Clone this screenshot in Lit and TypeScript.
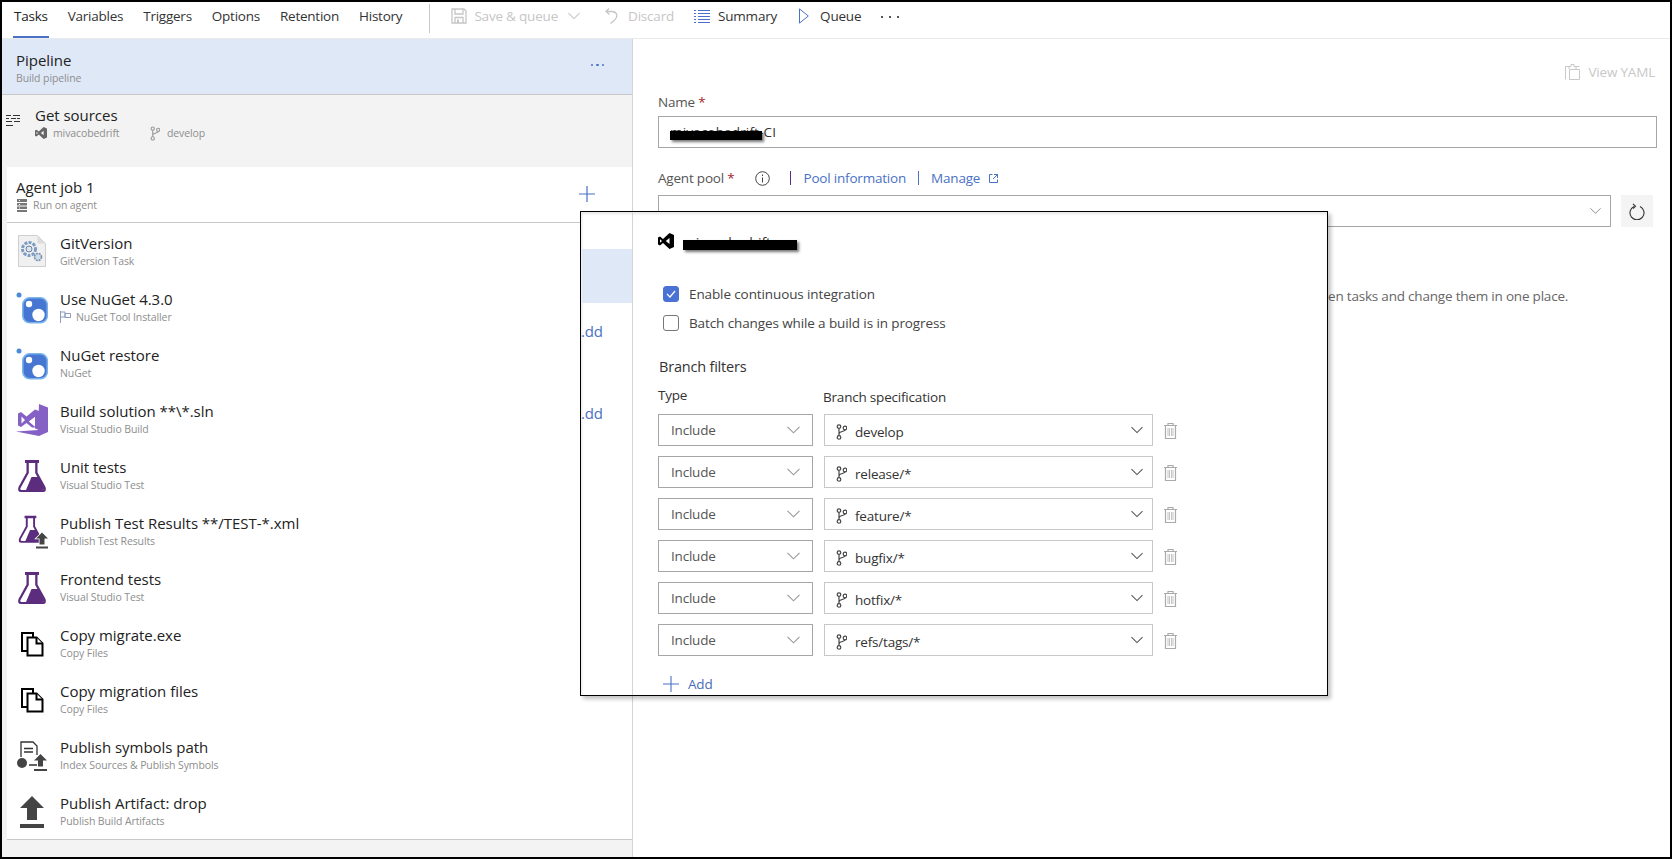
import { LitElement, html, svg, css } from "lit";
import { customElement } from "lit/decorators.js";

const vsLogo = (color: string, w = 12, h = 12) => html`<svg width=${w} height=${h} viewBox="0 0 16 16"><path fill=${color} d="M11.5 0 16 2v12l-4.500 2L5 10l-3 2.500L0 11.500v-7L2 3.500 5 6zM2 6.300v3.400L4 8zM11.500 5 7.800 8l3.700 3z"/></svg>`;

const branch = (color = "#444", w = 11, h = 16) => html`<svg width=${w} height=${h} viewBox="0 0 11 16" fill="none" stroke=${color} stroke-width="1.200"><circle cx="3" cy="2.600" r="1.800"/><circle cx="3" cy="13.400" r="1.800"/><circle cx="9" cy="4" r="1.800"/><path d="M3 4.500v7M3 10c0-3 6-2 6-4.200"/></svg>`;

const chevron = (color: string, w = 13) => html`<svg width=${w} height="8" viewBox="0 0 13 8" fill="none" stroke=${color} stroke-width="1.100"><path d="M.5.800 6.500 6.800 12.500.800"/></svg>`;

const flask = svg`<path fill="#5c2d7e" d="M9 1h14v3h-1.500v9.500L29.500 28Q31 33 27 33H5Q1 33 2.500 28L10.500 13.500V4H9z"/><path fill="#fff" d="M12.800 4H19.200V14L27.500 29Q28.300 31 26 31H6Q3.700 31 4.500 29L12.800 14z"/><path fill="#5c2d7e" d="M10 31 15.500 18H22.500L28 28.500Q28.800 31 26 31z"/>`;

const uploadArrow = (fill: string) => svg`<path fill=${fill} d="M12 0 24 12h-7v12H7V12H0zM0 28h24v4H0z"/>`;

const taskIcons: Record<string, unknown> = {
  git: html`<svg width="32" height="32" viewBox="0 0 32 32"><path fill="#f0f0f0" stroke="#cfcfcf" d="M2.500.500h19l8 8v23h-27z"/><path fill="#dcdcdc" d="M21.500.500v8h8z"/><circle cx="13" cy="14" r="6.500" fill="none" stroke="#7c9cc4" stroke-width="3" stroke-dasharray="3 1.200"/><circle cx="13" cy="14" r="3" fill="#dbe5f1" stroke="#6b7f99"/><circle cx="22" cy="22" r="3.500" fill="#cfdcec" stroke="#7c90aa" stroke-width="1.600" stroke-dasharray="2 .8"/></svg>`,
  nuget: html`<svg width="32" height="34" viewBox="0 0 32 34"><circle cx="3" cy="4" r="2.500" fill="#4a8bd6"/><rect x="6.800" y="6.800" width="24.500" height="25" rx="7" fill="#4676d2" stroke="#78b4ea" stroke-width="1.600"/><circle cx="13" cy="13" r="3.200" fill="#fff"/><circle cx="22.500" cy="24" r="6.200" fill="#fff"/></svg>`,
  vs: html`<svg width="32" height="34" viewBox="0 0 32 34"><g transform="translate(0 1)"><path fill="#8661c5" d="M23 0 32 3.500V28l-9 4-23-4.500L22 26z"/><path fill="#8661c5" d="M2 9.500 5 8l5.500 4.500L19 5.500 23 7v19l-4-1.500V13l-6 4.500 6 5-.1 1-2.900 0L10.500 19 5 23l-3-1.500zM5.500 12.500v7L9 16z"/><path fill="#fff" d="M19 13v9.500L13 17.500z"/></g></svg>`,
  flask: html`<svg width="32" height="34" viewBox="0 0 32 34">${flask}</svg>`,
  flaskUp: html`<svg width="32" height="34" viewBox="0 0 32 34"><g transform="translate(1 0) scale(.84)">${flask}</g><g transform="translate(20 17.500) scale(.5)" stroke="#fff" stroke-width="3" paint-order="stroke">${uploadArrow("#444")}</g></svg>`,
  copy: html`<svg width="32" height="32" viewBox="0 0 32 32" fill="#fff" stroke="#000" stroke-width="2"><path d="M6 6h11v18H6z"/><path d="M11.500 10.500h9l6 6v12H11.500z"/><path d="M20.500 10.500v6h6"/></svg>`,
  symbols: html`<svg width="32" height="34" viewBox="0 0 32 34"><g transform="translate(0 2)"><path fill="none" stroke="#333" stroke-width="1.300" d="M5 16V1h12l4 4v9"/><path stroke="#333" stroke-width="1.300" d="M8 7.500h9M8 11h9M13 24h8"/><circle cx="6" cy="22" r="5" fill="#444"/><path fill="#444" d="M24.500 13 31 19.500h-4v6h-5v-6h-4zM18 28h13v2H18z"/></g></svg>`,
  upload: html`<svg width="32" height="34" viewBox="0 0 32 34"><g transform="translate(4 1)">${uploadArrow("#444")}</g></svg>`,
};

const tasks = [
  { icon: "git", title: "GitVersion", sub: "GitVersion Task" },
  { icon: "nuget", title: "Use NuGet 4.3.0", sub: "NuGet Tool Installer", flag: true },
  { icon: "nuget", title: "NuGet restore", sub: "NuGet" },
  { icon: "vs", title: "Build solution **\\*.sln", sub: "Visual Studio Build" },
  { icon: "flask", title: "Unit tests", sub: "Visual Studio Test" },
  { icon: "flaskUp", title: "Publish Test Results **/TEST-*.xml", sub: "Publish Test Results" },
  { icon: "flask", title: "Frontend tests", sub: "Visual Studio Test" },
  { icon: "copy", title: "Copy migrate.exe", sub: "Copy Files" },
  { icon: "copy", title: "Copy migration files", sub: "Copy Files" },
  { icon: "symbols", title: "Publish symbols path", sub: "Index Sources & Publish Symbols" },
  { icon: "upload", title: "Publish Artifact: drop", sub: "Publish Build Artifacts" },
];

const filters = ["develop", "release/*", "feature/*", "bugfix/*", "hotfix/*", "refs/tags/*"];
const tabs = ["Tasks", "Variables", "Triggers", "Options", "Retention", "History"];

@customElement("app-root")
export class AppRoot extends LitElement {
  static styles = css`
    :host {
      display: block;
      position: relative;
      box-sizing: border-box;
      width: 1672px;
      height: 859px;
      border: 2px solid #000;
      background: #fff;
      overflow: hidden;
      font-family: "Open Sans", "Noto Sans", sans-serif;
      font-size: 13.5px;
      letter-spacing: -0.2px;
      color: #333;
    }
    .frame {
      display: flex;
      flex-direction: column;
      height: 100%;
    }

    /* top bar */
    .toolbar {
      display: flex;
      align-items: center;
      box-sizing: border-box;
      height: 37px;
      padding-left: 12px;
      border-bottom: 1px solid #eaeaea;
      flex: none;
    }
    .tabs {
      display: flex;
      gap: 20px;
      align-self: stretch;
      letter-spacing: -0.24px;
    }
    .tab {
      display: flex;
      align-items: center;
      box-sizing: border-box;
      height: 36px;
      padding-bottom: 6px;
      border-bottom: 2px solid transparent;
      color: #333;
    }
    .tab.active {
      border-bottom-color: #4a70c8;
      color: #222;
      margin: 0 -1px;
      padding: 0 1px 6px;
    }
    .divider {
      width: 1px;
      height: 29px;
      background: #c8c8c8;
      margin: -3px 21px 0 27px;
    }
    .action {
      display: flex;
      align-items: center;
      gap: 7px;
      margin-top: -8px;
      color: #333;
    }
    .action.off {
      color: #c6c6c6;
    }
    .more i {
      width: 2px;
      height: 2px;
      background: #555;
    }

    /* left panel */
    .main {
      display: flex;
      flex: 1;
      min-height: 0;
    }
    .left {
      width: 630px;
      flex: none;
      background: #f3f3f3;
      display: flex;
      flex-direction: column;
      border-right: 1px solid #d4d4d4;
    }
    .pipeline {
      box-sizing: border-box;
      height: 56px;
      background: #dfe8f7;
      border-bottom: 1px solid #c8c8c8;
      padding: 11px 28px 0 14px;
      display: flex;
      justify-content: space-between;
    }
    .big {
      font-size: 15px;
      line-height: 20px;
      letter-spacing: -0.03px;
      color: #222;
    }
    .small {
      font-size: 10.500px;
      line-height: 16px;
      letter-spacing: -0.1px;
      color: #8e8e8e;
    }
    .dots {
      display: flex;
      gap: 3px;
      align-items: center;
      height: 30px;
    }
    .dots i {
      width: 2.500px;
      height: 2.500px;
      border-radius: 50%;
      background: #4a70c8;
    }
    .sources {
      box-sizing: border-box;
      height: 72px;
      padding: 10px 0 0 4px;
      display: flex;
      gap: 15px;
    }
    .sources svg.lines {
      margin-top: 9px;
      flex: none;
    }
    .srcline {
      display: flex;
      align-items: center;
      height: 16px;
    }
    .srcline .name {
      margin-left: 6px;
      width: 97px;
    }
    .srcline .br {
      margin-left: 7px;
    }
    .job {
      flex: none;
      margin-left: 5px;
      background: #fff;
      border-bottom: 1px solid #c8c8c8;
    }
    .jobhead {
      box-sizing: border-box;
      height: 56px;
      border-bottom: 1px solid #c8c8c8;
      padding: 10px 37px 0 9px;
      display: flex;
      justify-content: space-between;
    }
    .jobhead .small {
      display: flex;
      align-items: center;
      gap: 6px;
      padding-left: 1px;
    }
    .plus {
      margin-top: 9px;
    }
    .task {
      box-sizing: border-box;
      height: 56px;
      display: flex;
      padding: 12px 0 0 9px;
      gap: 12px;
    }
    .task .ic {
      width: 32px;
      height: 32px;
      flex: none;
    }
    .task .big {
      margin-top: -2px;
    }
    .task .small {
      display: flex;
      align-items: center;
      gap: 5px;
    }

    /* right panel */
    .right {
      flex: 1;
      display: flex;
      flex-direction: column;
      padding: 25px 13px 0 25px;
      min-width: 0;
    }
    .yaml {
      display: flex;
      justify-content: flex-end;
      align-items: center;
      gap: 9px;
      height: 16px;
      padding-right: 2px;
      color: #c8c8c8;
    }
    .label {
      height: 20px;
      line-height: 20px;
      color: #555;
    }
    .label b,
    .req {
      font-weight: 400;
      color: #a4262c;
    }
    .namelabel {
      margin: 12px 0 4px;
    }
    .input {
      position: relative;
      box-sizing: border-box;
      height: 32px;
      border: 1px solid #a6a6a6;
      padding-left: 11px;
      line-height: 31px;
      letter-spacing: 0.15px;
      color: #333;
    }
    .redact {
      position: absolute;
      background: #000;
      box-shadow: 2px 2px 3px rgba(0, 0, 0, 0.55);
    }
    .input .redact {
      left: 11px;
      top: 14px;
      width: 92px;
      height: 9px;
    }
    .agent {
      display: flex;
      align-items: center;
      height: 20px;
      margin: 20px 0 7px;
      color: #555;
    }
    .link {
      color: #4a72c4;
    }
    .sep {
      width: 1px;
      height: 14px;
      background: #5c2d7e;
    }
    .selectrow {
      display: flex;
      gap: 10px;
    }
    .select {
      box-sizing: border-box;
      width: 953px;
      height: 32px;
      border: 1px solid #a6a6a6;
      display: flex;
      align-items: center;
      justify-content: flex-end;
      padding-right: 9px;
    }
    .refresh {
      width: 32px;
      height: 32px;
      background: #f4f4f4;
      display: flex;
      align-items: center;
      justify-content: center;
    }
    .hint {
      margin: 59px 0 0 670px;
      line-height: 20px;
      color: #666;
    }

    /* pasted trigger dialog */
    .dialog {
      position: absolute;
      left: 578px;
      top: 209px;
      box-sizing: border-box;
      width: 748px;
      height: 485px;
      background: #fff;
      border: 1px solid #000;
      box-shadow: 3px 3px 4px rgba(0, 0, 0, 0.24), inset 1px 2px 3px rgba(0, 0, 0, 0.1);
      display: flex;
    }
    .under {
      width: 51px;
      flex: none;
      border-right: 1px solid #d4d4d4;
      padding-top: 37px;
      font-size: 15px;
      color: #4a72c4;
    }
    .under .sel {
      height: 54px;
      margin-left: 1px;
      background: #dfe8f7;
    }
    .under div.dd {
      height: 20px;
      line-height: 20px;
      margin: 18px 0 62px 0;
    }
    .body {
      padding: 21px 0 0 25px;
      flex: 1;
      display: flex;
      flex-direction: column;
    }
    .repo {
      position: relative;
      display: flex;
      height: 16px;
      gap: 9px;
      color: #333;
      font-size: 14px;
      line-height: 18px;
    }
    .repo span {
      margin-top: 1px;
    }
    .repo .redact {
      left: 25px;
      top: 7px;
      width: 114px;
      height: 10px;
    }
    .checks {
      display: flex;
      flex-direction: column;
      gap: 13px;
      margin: 37px 0 0 5px;
      letter-spacing: -0.11px;
    }
    .check {
      display: flex;
      align-items: center;
      gap: 10px;
      height: 16px;
      color: #444;
    }
    .box {
      box-sizing: border-box;
      width: 16px;
      height: 16px;
      border-radius: 3px;
      border: 1px solid #777;
      display: flex;
      align-items: center;
      justify-content: center;
    }
    .box.on {
      background: #4a72d4;
      border-color: #4a72d4;
    }
    .heading {
      margin-top: 25px;
      padding-left: 1px;
      height: 22px;
      line-height: 22px;
      font-size: 14.500px;
      color: #333;
    }
    .cols {
      display: flex;
      gap: 10px;
      margin: 9px 0 7px;
      height: 20px;
      color: #333;
    }
    .cols div:first-child {
      width: 155px;
      margin-top: -1px;
    }
    .cols div:last-child {
      margin-top: 1px;
    }
    .rows {
      display: flex;
      flex-direction: column;
      gap: 10px;
    }
    .row {
      display: flex;
      align-items: center;
      gap: 11px;
    }
    .row > svg {
      margin-top: 2px;
    }
    .type,
    .spec {
      box-sizing: border-box;
      height: 32px;
      display: flex;
      align-items: center;
      justify-content: space-between;
    }
    .type {
      width: 155px;
      border: 1px solid #a6a6a6;
      padding: 0 12px 0 12px;
      color: #555;
    }
    .spec {
      width: 329px;
      border: 1px solid #c8c8c8;
      padding: 3px 9px 0 11px;
      color: #333;
    }
    .spec > div {
      display: flex;
      align-items: center;
      gap: 8px;
    }
    .add {
      display: flex;
      align-items: center;
      gap: 9px;
      height: 20px;
      margin: 18px 0 0 5px;
      color: #4a6bb8;
    }
  `;

  render() {
    return html`
      <div class="frame">
        ${this.renderToolbar()}
        <div class="main">
          ${this.renderLeft()} ${this.renderRight()}
        </div>
      </div>
      ${this.renderDialog()}
    `;
  }

  renderToolbar() {
    return html`
      <div class="toolbar">
        <div class="tabs">
          ${tabs.map((t, i) => html`<div class="tab ${i === 0 ? "active" : ""}">${t}</div>`)}
        </div>
        <div class="divider"></div>
        <div class="action off">
          <svg width="16" height="16" viewBox="0 0 16 16" fill="none" stroke="#c6c6c6" stroke-width="1.300"><path d="M1 1h12l2 2v12H1zM4 1v5h8V1M4 15V9.500h8V15"/><path d="M6 11.500h2v3.500H6z" fill="#c6c6c6" stroke="none"/></svg>
          <span>Save &amp; queue</span>
          <span style="margin-left:3px;display:flex">${chevron("#c6c6c6", 12)}</span>
        </div>
        <div class="action off" style="margin-left:25px;gap:10px">
          <svg width="13" height="16" viewBox="0 0 13 16" fill="none" stroke="#c6c6c6" stroke-width="1.300"><path d="M4 .500 1 3.500 4.500 6.500M1 3.500H6.500C12 3.500 14 8.500 9 12.500L5.500 15.500"/></svg>
          <span>Discard</span>
        </div>
        <div class="action" style="margin-left:20px;gap:8px">
          <svg width="16" height="14" viewBox="0 0 16 14" stroke="#4a70c8" stroke-width="1"><path d="M4 1.500h12M4 4.500h12M4 7.500h12M4 10.500h12M4 13.500h12M0 1.500h2M0 4.500h2M0 7.500h2M0 10.500h2M0 13.500h2"/></svg>
          <span>Summary</span>
        </div>
        <div class="action" style="margin-left:22px;gap:11px">
          <svg width="10" height="16" viewBox="0 0 10 16" fill="none" stroke="#4a70c8" stroke-width="1"><path d="M.500.900 9.300 8 .500 15.100z"/></svg>
          <span>Queue</span>
        </div>
        <div class="action more" style="margin-left:20px;gap:6px;margin-top:-7px"><i></i><i></i><i></i></div>
      </div>
    `;
  }

  renderLeft() {
    return html`
      <div class="left">
        <div class="pipeline">
          <div>
            <div class="big">Pipeline</div>
            <div class="small">Build pipeline</div>
          </div>
          <div class="dots"><i></i><i></i><i></i></div>
        </div>
        <div class="sources">
          <svg class="lines" width="14" height="13" viewBox="0 0 14 13" stroke="#333" stroke-width="1"><path d="M0 1.500h5M7 1.500h7M0 4.500h3M5 4.500h5M11 4.500h3M0 7.500h6M8 7.500h6M0 11.500h7"/></svg>
          <div>
            <div class="big">Get sources</div>
            <div class="small srcline">
              ${vsLogo("#666")}
              <span class="name">mivacobedrift</span>
              ${branch("#999", 10, 15)}
              <span class="br">develop</span>
            </div>
          </div>
        </div>
        <div class="job">
          <div class="jobhead">
            <div>
              <div class="big">Agent job 1</div>
              <div class="small">
                <svg width="10" height="13" viewBox="0 0 10 13" fill="#777"><path d="M0 0h10v3H0zM0 4h10v2.500H0zM0 7.500h10V10H0zM0 11h10v2H0z"/><path d="M2 1h1v1H2zM2 5h1v1H2zM2 8.500h1v1H2z" fill="#fff"/></svg>
                Run on agent
              </div>
            </div>
            <svg class="plus" width="16" height="16" viewBox="0 0 16 16" stroke="#4a70c8" stroke-width="1.200"><path d="M8 0v16M0 8h16"/></svg>
          </div>
          ${tasks.map(
            (t) => html`
              <div class="task">
                <div class="ic">${taskIcons[t.icon]}</div>
                <div>
                  <div class="big">${t.title}</div>
                  <div class="small">
                    ${t.flag
                      ? html`<svg width="11" height="12" viewBox="0 0 11 12" fill="none" stroke="#8a9cc0"><path d="M.500 0v12M.500 1H5v5H.500M5 2.500h5.500v4H5z"/></svg>`
                      : ""}
                    ${t.sub}
                  </div>
                </div>
              </div>
            `
          )}
        </div>
      </div>
    `;
  }

  renderRight() {
    return html`
      <div class="right">
        <div class="yaml">
          <svg width="15" height="16" viewBox="0 0 15 16" fill="none" stroke="#c8c8c8"><path d="M4 5V2.500h2V.500h3v2h2V5M.500 15.500V2.500H4M11 2.500h3.500M4.500 5.500h10v10h-10z"/></svg>
          <span>View YAML</span>
        </div>
        <div class="label namelabel">Name <b>*</b></div>
        <div class="input">mivacobedrift-CI<div class="redact"></div></div>
        <div class="agent">
          <span>Agent pool <b class="req">*</b></span>
          <svg style="margin-left:20px" width="15" height="15" viewBox="0 0 15 15" fill="none" stroke="#444"><circle cx="7.500" cy="7.500" r="6.800"/><path d="M7.500 6.500v5M7.500 3.500v1.500"/></svg>
          <span class="sep" style="margin:0 13px 0 20px"></span>
          <span class="link">Pool information</span>
          <span class="sep" style="margin:0 12px 0 12px;background:#4a72c4"></span>
          <span class="link">Manage</span>
          <svg style="margin-left:9px" width="9" height="9" viewBox="0 0 9 9" fill="none" stroke="#4a72c4"><path d="M3.500.500H.500v8h8V5.500M5 .500h3.500V4M8.500.500 4 5"/></svg>
        </div>
        <div class="selectrow">
          <div class="select">${chevron("#888", 11)}</div>
          <div class="refresh">
            <svg width="16" height="17" viewBox="0 0 16 17" fill="none" stroke="#333" stroke-width="1.100"><path d="M5 3.500a7 7 0 1 0 6 0"/><path d="M4 .800 6.500 3.300 4 5.500"/></svg>
          </div>
        </div>
        <div class="hint">en tasks and change them in one place.</div>
      </div>
    `;
  }

  renderDialog() {
    return html`
      <div class="dialog">
        <div class="under">
          <div class="sel"></div>
          <div class="dd">.dd</div>
          <div class="dd">.dd</div>
        </div>
        <div class="body">
          <div class="repo">
            ${vsLogo("#000", 16, 16)}
            <span>mivacobedrift</span>
            <div class="redact"></div>
          </div>
          <div class="checks">
            <div class="check">
              <div class="box on">
                <svg width="10" height="8" viewBox="0 0 10 8" fill="none" stroke="#fff" stroke-width="1.200"><path d="M1 4l3 3 5-6"/></svg>
              </div>
              Enable continuous integration
            </div>
            <div class="check"><div class="box"></div>Batch changes while a build is in progress</div>
          </div>
          <div class="heading">Branch filters</div>
          <div class="cols"><div>Type</div><div>Branch specification</div></div>
          <div class="rows">
            ${filters.map(
              (f) => html`
                <div class="row">
                  <div class="type"><span>Include</span>${chevron("#999", 13)}</div>
                  <div class="spec">
                    <div>${branch()}<span>${f}</span></div>
                    <span style="display:flex;margin-top:-3px">${chevron("#555", 12)}</span>
                  </div>
                  <svg width="13" height="16" viewBox="0 0 13 16" fill="none" stroke="#aaa" stroke-width="1.200"><path d="M0 2.500h13M4 2.500V.500h5v2M1.500 2.500v13h10v-13"/><path d="M4 5v8M5.500 5v8M7.500 5v8M9 5v8" stroke-width=".700"/></svg>
                </div>
              `
            )}
          </div>
          <div class="add">
            <svg width="16" height="16" viewBox="0 0 16 16" stroke="#4a70c8" stroke-width="1.100"><path d="M8 0v16M0 8h16"/></svg>
            Add
          </div>
        </div>
      </div>
    `;
  }
}
